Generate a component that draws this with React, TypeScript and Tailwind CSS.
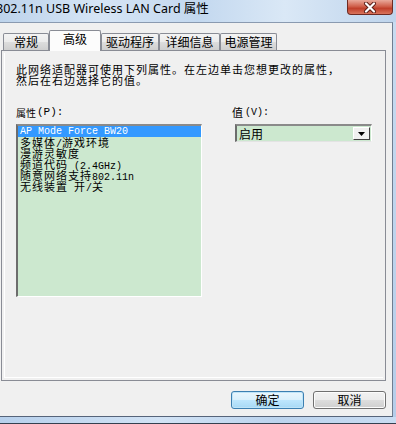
import React from 'react';

// Windows 7 style "properties" dialog, Advanced tab

const CJK_RE = /[\u3000-\u303f\u4e00-\u9fff\uff00-\uffef]/;

interface Tab {
  label: string;
  cls: string;
  active?: boolean;
}

const tabs: Tab[] = [
  { label: '常规', cls: 'w-[46px]' },
  { label: '高级', cls: 'w-[52px]', active: true },
  { label: '驱动程序', cls: 'w-[58px]' },
  { label: '详细信息', cls: 'w-[61px]' },
  { label: '电源管理', cls: 'w-[57px]' },
];

const items = [
  'AP Mode Force BW20',
  '多媒体/游戏环境',
  '漫游灵敏度',
  '频道代码 (2.4GHz)',
  '随意网络支持802.11n',
  '无线装置 开/关',
];

// SimSun-ish look: CJK in a 12px cell, latin half width (6px)
function Mixed({ text }: { text: string }) {
  const parts = text.match(/[\u3000-\u303f\u4e00-\u9fff\uff00-\uffef]+|[^\u3000-\u303f\u4e00-\u9fff\uff00-\uffef]+/g) ?? [];
  return (
    <>
      {parts.map((p, i) =>
        CJK_RE.test(p) ? (
          <span key={i} className="font-['Noto_Sans_CJK_SC',sans-serif] text-[11px] leading-[11px] tracking-[1px] whitespace-pre">{p}</span>
        ) : (
          <span key={i} className="font-['Liberation_Mono',monospace] text-[10px] leading-[11px] whitespace-pre">{p}</span>
        )
      )}
    </>
  );
}

function CloseButton() {
  return (
    <div className="mr-[3px] flex h-[15px] w-[46px] items-center justify-center rounded-b-[4px] border border-t-0 border-[#6e2a22] bg-[linear-gradient(180deg,#e9a99b_0%,#d0614c_45%,#c0402b_60%,#d9745c_100%)]">
      <svg width="14" height="11" viewBox="0 0 14 11">
        <path d="M3 1.5 L11 9.5 M11 1.5 L3 9.5" stroke="#5a1d16" strokeWidth="4" strokeLinecap="round" />
        <path d="M3 1.5 L11 9.5 M11 1.5 L3 9.5" stroke="#ffffff" strokeWidth="2.2" strokeLinecap="round" />
      </svg>
    </div>
  );
}

export default function App() {
  return (
    <div className="flex h-[424px] w-[396px] flex-col overflow-hidden bg-[#c6d9ef] font-['Noto_Sans_CJK_SC',sans-serif] text-black">
      {/* title bar */}
      <div className="flex h-[22px] items-start bg-[linear-gradient(90deg,#bdd3eb_0%,#d6e5f5_25%,#c3d8ef_50%,#dae8f6_72%,#bed4ec_100%)]">
        <div className="ml-[-4px] pt-[1px] font-['Noto_Sans','Noto_Sans_CJK_SC',sans-serif] text-[12.5px] leading-[16px] whitespace-nowrap">
          802.11n USB Wireless LAN Card 属性
        </div>
        <div className="ml-auto">
          <CloseButton />
        </div>
      </div>

      <div className="flex">
        {/* client area */}
        <div className="flex h-[395px] w-[393px] flex-col border-t border-r border-b border-t-[#8a9ab0] border-r-[#6f7d90] border-b-[#56647a] bg-[#f0f0f0]">
          {/* tabs */}
          <div className="mt-[7px] flex h-[20px] items-end pl-[3px]">
            {tabs.map((t) =>
              t.active ? (
                <div
                  key={t.label}
                  className={`${t.cls} relative z-10 -mb-px flex h-[21px] justify-center rounded-t-[2px] border border-b-0 border-[#898c95] bg-[#fcfcfc] pt-[1px] text-[12px] leading-[14px]`}
                >
                  {t.label}
                </div>
              ) : (
                <div
                  key={t.label}
                  className={`${t.cls} flex h-[17px] justify-center rounded-t-[2px] border border-b-0 border-[#898c95] bg-[linear-gradient(180deg,#f4f4f4_0%,#ebebeb_50%,#dddddd_51%,#cfcfcf_100%)] pt-[1px] text-[12px] leading-[14px]`}
                >
                  {t.label}
                </div>
              )
            )}
          </div>

          {/* tab page */}
          <div className="ml-[1px] flex h-[331px] w-[385px] flex-col border border-[#898c95] bg-[#f0f0f0] p-[2px]">
            <div className="flex flex-1 flex-col border-b border-l border-white pt-[11px] pl-[11px]">
              <div className="text-[11px] leading-[11px] tracking-[1px]">
                <div className="whitespace-nowrap">此网络适配器可使用下列属性。在左边单击您想更改的属性，</div>
                <div className="whitespace-nowrap">然后在右边选择它的值。</div>
              </div>

              <div className="mt-[21px] flex">
                {/* property list */}
                <div className="flex w-[186px] flex-col">
                  <div className="flex h-[11px] items-center whitespace-nowrap text-[10px] leading-[11px]">
                    属性
                    <span className="ml-[1px] font-['Liberation_Mono',monospace] text-[11px]">(P):</span>
                  </div>
                  <div className="mt-[6px] flex h-[173px] flex-col overflow-hidden border-t-2 border-l-2 border-r border-b border-t-[#8a8a8a] border-l-[#6d6d6d] border-r-white border-b-white bg-[#cce8cf]">
                    {items.map((it, i) => (
                      <div
                        key={it}
                        className={`flex h-[11px] shrink-0 items-baseline pl-[2px] ${i === 0 ? 'bg-[#3399ff] text-white' : 'text-black'}`}
                      >
                        <Mixed text={it} />
                      </div>
                    ))}
                  </div>
                </div>

                {/* value */}
                <div className="ml-[30px] flex flex-col">
                  <div className="flex h-[11px] items-center whitespace-nowrap text-[11px] leading-[11px]">
                    值
                    <span className="ml-[2px] font-['Liberation_Mono',monospace] text-[10px]">(V):</span>
                  </div>
                  <div className="mt-[6px] ml-[3px] flex h-[18px] w-[137px] items-center border-t-2 border-l-2 border-r border-b border-t-[#8a8a8a] border-l-[#6d6d6d] border-r-white border-b-[#e3e3e3] bg-[#cce8cf]">
                    <div className="pl-[2px] text-[12px] leading-[14px]">启用</div>
                    <div className="mr-[1px] ml-auto flex h-[13px] w-[17px] items-center justify-center border border-t-white border-l-white border-r-[#404040] border-b-[#404040] bg-[#f0f0f0]">
                      <svg width="7" height="4" viewBox="0 0 7 4">
                        <polygon points="0,0 7,0 3.5,4" fill="#000" />
                      </svg>
                    </div>
                  </div>
                </div>
              </div>
            </div>
          </div>

          {/* dialog buttons */}
          <div className="mt-[10px] flex justify-end gap-[9px] pr-[6px]">
            <button className="flex h-[18px] w-[73px] items-center justify-center rounded-[3px] border border-[#3c7fb1] bg-[linear-gradient(180deg,#eaf6fd_0%,#d9f0fc_50%,#bee6fd_51%,#a7d9f5_100%)] text-[12px] leading-[14px] shadow-[inset_0_0_0_1px_#bfe4f8]">
              确定
            </button>
            <button className="flex h-[18px] w-[73px] items-center justify-center rounded-[3px] border border-[#707070] bg-[linear-gradient(180deg,#f2f2f2_0%,#ebebeb_50%,#dddddd_51%,#cfcfcf_100%)] text-[12px] leading-[14px] shadow-[inset_0_0_0_1px_#fcfcfc]">
              取消
            </button>
          </div>
        </div>

        {/* right window frame */}
        <div className="w-[3px] bg-[linear-gradient(180deg,#c8dbf0_0%,#b5cde9_100%)]" />
      </div>

      {/* bottom window frame */}
      <div className="h-[7px] border-b border-[#34404f] bg-[linear-gradient(90deg,#b7d0ec_0%,#d2e3f5_40%,#bcd4ee_70%,#c9dcf2_100%)]" />
    </div>
  );
}
